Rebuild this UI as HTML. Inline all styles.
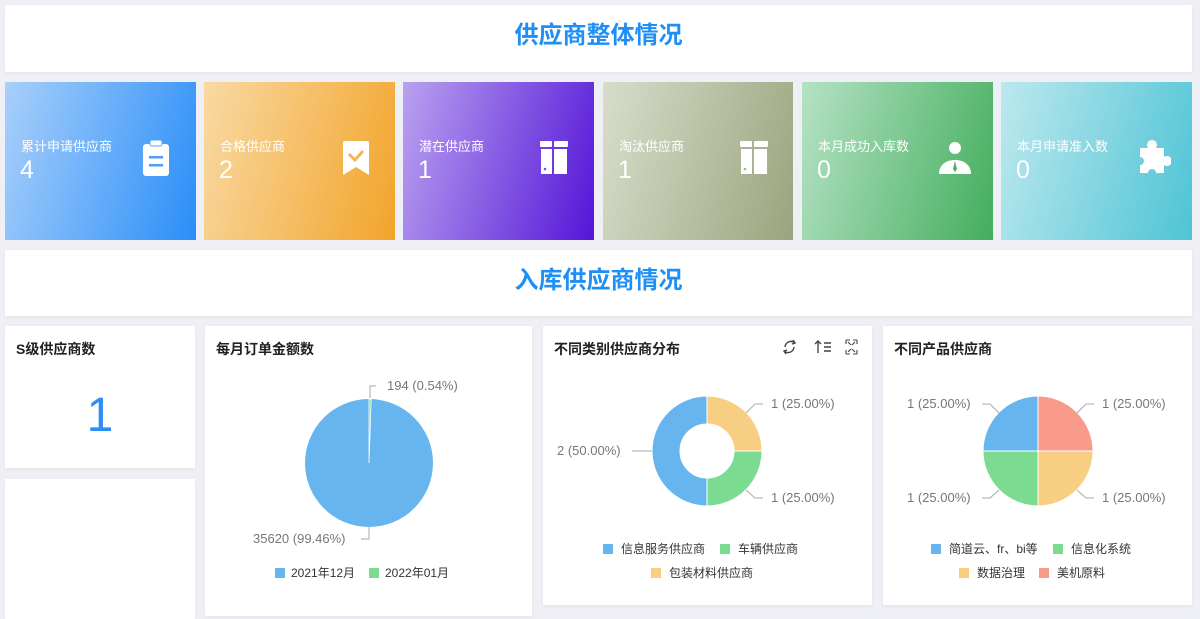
<!DOCTYPE html>
<html><head><meta charset="utf-8"><style>
*{margin:0;padding:0;box-sizing:border-box}
body{width:1200px;height:614px;background:#eff0f5;position:relative;overflow:hidden;font-family:"Liberation Sans","Noto Sans CJK SC",sans-serif}
.box{position:absolute;background:#fff;box-shadow:0 1px 4px rgba(0,0,0,.06)}
.title{display:flex;align-items:center;justify-content:center;color:#1e8ff5;font-size:24px;font-weight:bold;padding-bottom:12px}
.card{position:absolute;top:82px;height:158px;width:191px;color:#fff}
.card .l{position:absolute;left:16px;top:54px;font-size:13px}
.card .n{position:absolute;left:15px;top:74px;font-size:25px}
.card svg{position:absolute;left:136px;top:58px}
.ph{position:absolute;left:11px;top:13px;font-size:14px;font-weight:bold;color:#222}
svg text{font-family:"Liberation Sans","Noto Sans CJK SC",sans-serif}
</style></head><body>
<div class="box title" style="left:5px;top:5px;width:1187px;height:67px">供应商整体情况</div>

<div class="card" style="left:5px;background:linear-gradient(105deg,#a8cffb,#2a8ef8)"><div class="l">累计申请供应商</div><div class="n">4</div>
<svg width="32" height="38" viewBox="0 0 32 38"><rect x="2" y="4" width="26" height="32" rx="3" fill="#fff"/><rect x="9" y="0" width="12" height="6" rx="2" fill="#fff" stroke="#5aa6fa" stroke-width="1"/><rect x="8" y="16" width="14" height="2.5" fill="#4c9ef9"/><rect x="8" y="24" width="14" height="2.5" fill="#4c9ef9"/></svg></div>

<div class="card" style="left:204px;width:191px;background:linear-gradient(105deg,#f9d9a3,#f2a42a)"><div class="l">合格供应商</div><div class="n">2</div>
<svg width="32" height="38" viewBox="0 0 32 38"><path d="M3 1h24a2 2 0 0 1 2 2v32l-13-8-13 8V3a2 2 0 0 1 2-2z" fill="#fff"/><path d="M9 14l6 6 8-9" stroke="#f4b552" stroke-width="3" fill="none"/></svg></div>

<div class="card" style="left:403px;background:linear-gradient(105deg,#b9a1ef,#5515d8)"><div class="l">潜在供应商</div><div class="n">1</div>
<svg width="32" height="38" viewBox="0 0 32 38"><rect x="1" y="1" width="12" height="6" rx="1" fill="#fff"/><rect x="15" y="1" width="14" height="6" rx="1" fill="#fff"/><rect x="2" y="9" width="11" height="25" fill="#fff"/><rect x="15" y="9" width="13" height="25" fill="#fff"/><circle cx="6" cy="29" r="1.3" fill="#7a4fe2"/></svg></div>

<div class="card" style="left:603px;width:190px;background:linear-gradient(105deg,#d8ddcb,#99a57e)"><div class="l">淘汰供应商</div><div class="n">1</div>
<svg width="32" height="38" viewBox="0 0 32 38"><rect x="1" y="1" width="12" height="6" rx="1" fill="#fff"/><rect x="15" y="1" width="14" height="6" rx="1" fill="#fff"/><rect x="2" y="9" width="11" height="25" fill="#fff"/><rect x="15" y="9" width="13" height="25" fill="#fff"/><circle cx="6" cy="29" r="1.3" fill="#aab090"/></svg></div>

<div class="card" style="left:802px;background:linear-gradient(105deg,#b5e2c4,#43ae5e)"><div class="l">本月成功入库数</div><div class="n">0</div>
<svg width="34" height="38" viewBox="0 0 34 38"><circle cx="17" cy="8" r="6" fill="#fff"/><path d="M1 34c0-9 7-14 16-14s16 5 16 14z" fill="#fff"/><path d="M17 21l-2 8 2 3 2-3z" fill="#4bb066"/></svg></div>

<div class="card" style="left:1001px;background:linear-gradient(105deg,#bde8ee,#4ec4d5)"><div class="l">本月申请准入数</div><div class="n">0</div>
<svg width="34" height="38" viewBox="0 0 34 38"><path d="M3 8h8a5 5 0 1 1 8 0h8v9a5 5 0 1 1 0 8v8h-8a4 4 0 0 0-8 0H3v-8a4 4 0 0 0 0-8z" fill="#fff"/></svg></div>

<div class="box title" style="left:5px;top:250px;width:1187px;height:66px">入库供应商情况</div>

<div class="box" style="left:5px;top:326px;width:190px;height:142px"><div class="ph">S级供应商数</div><div style="position:absolute;left:0;right:0;top:62px;text-align:center;font-size:48px;color:#2a8ef8">1</div></div>
<div class="box" style="left:5px;top:479px;width:190px;height:140px"></div>

<div class="box" style="left:205px;top:326px;width:327px;height:290px"><div class="ph">每月订单金额数</div>
<svg width="327" height="290" style="position:absolute;left:0;top:0">
<circle cx="164" cy="137" r="64" fill="#67b5ef"/>
<path d="M164 137V73A64 64 0 0 1 166.2 73.04z" fill="#7bdb91" stroke="#fff" stroke-width="0.8"/>
<path d="M165 72v-12h6" stroke="#aaa" fill="none"/><text x="182" y="64" font-size="13" fill="#777">194 (0.54%)</text>
<path d="M164 201v12h-8" stroke="#aaa" fill="none"/><text x="48" y="217" font-size="13" fill="#777">35620 (99.46%)</text>
<rect x="70" y="242" width="10" height="10" fill="#67b5ef"/><text x="86" y="251" font-size="12" fill="#333">2021年12月</text>
<rect x="164" y="242" width="10" height="10" fill="#7bdb91"/><text x="180" y="251" font-size="12" fill="#333">2022年01月</text>
</svg></div>

<div class="box" style="left:543px;top:326px;width:329px;height:279px"><div class="ph">不同类别供应商分布</div>
<svg width="329" height="279" style="position:absolute;left:0;top:0">
<g stroke="#444" fill="none" stroke-width="1.4"><path d="M252 17a6 6 0 0 0-10 4M241 25a6 6 0 0 0 10-4"/><path d="M250 14l2 3-3 1M243 28l-2-3 3-1"/>
<path d="M275 15v12M272 18l3-3 3 3M281 17h7M281 21h7M281 25h7"/>
<path d="M303 14h4M303 14v4M314 14h-4M314 14v4M303 28h4M303 28v-4M314 28h-4M314 28v-4M305 16l3 3M312 16l-3 3M305 26l3-3M312 26l-3-3" stroke-width="1.1"/></g>
<g transform="translate(164,125)">
<path d="M0-55A55 55 0 0 0 0 55V27A27 27 0 0 1 0-27z" fill="#67b5ef" stroke="#fff"/>
<path d="M0-55A55 55 0 0 1 55 0H27A27 27 0 0 0 0-27z" fill="#f8cf82" stroke="#fff"/>
<path d="M55 0A55 55 0 0 1 0 55V27A27 27 0 0 0 27 0z" fill="#7bdb91" stroke="#fff"/></g>
<g stroke="#aaa" fill="none"><path d="M203 87l9-9h8"/><path d="M203 164l9 8h8"/><path d="M109 125h-20"/></g>
<g font-size="13" fill="#777"><text x="228" y="82">1 (25.00%)</text><text x="228" y="176">1 (25.00%)</text><text x="14" y="129">2 (50.00%)</text></g>
<g font-size="12" fill="#333"><rect x="60" y="218" width="10" height="10" fill="#67b5ef"/><text x="78" y="227">信息服务供应商</text>
<rect x="177" y="218" width="10" height="10" fill="#7bdb91"/><text x="195" y="227">车辆供应商</text>
<rect x="108" y="242" width="10" height="10" fill="#f8cf82"/><text x="126" y="251">包装材料供应商</text></g>
</svg></div>

<div class="box" style="left:883px;top:326px;width:309px;height:279px"><div class="ph">不同产品供应商</div>
<svg width="309" height="279" style="position:absolute;left:0;top:0">
<g transform="translate(155,125)">
<path d="M0 0V-55A55 55 0 0 0 -55 0z" fill="#67b5ef" stroke="#fff"/>
<path d="M0 0V-55A55 55 0 0 1 55 0z" fill="#f99b8b" stroke="#fff"/>
<path d="M0 0H55A55 55 0 0 1 0 55z" fill="#f8cf82" stroke="#fff"/>
<path d="M0 0V55A55 55 0 0 1 -55 0z" fill="#7bdb91" stroke="#fff"/></g>
<g stroke="#aaa" fill="none"><path d="M194 87l9-9h8"/><path d="M194 164l9 8h8"/><path d="M116 87l-9-9h-8"/><path d="M116 164l-9 8h-8"/></g>
<g font-size="13" fill="#777"><text x="219" y="82">1 (25.00%)</text><text x="219" y="176">1 (25.00%)</text><text x="24" y="82">1 (25.00%)</text><text x="24" y="176">1 (25.00%)</text></g>
<g font-size="12" fill="#333"><rect x="48" y="218" width="10" height="10" fill="#67b5ef"/><text x="66" y="227">简道云、fr、bi等</text>
<rect x="170" y="218" width="10" height="10" fill="#7bdb91"/><text x="188" y="227">信息化系统</text>
<rect x="76" y="242" width="10" height="10" fill="#f8cf82"/><text x="94" y="251">数据治理</text>
<rect x="156" y="242" width="10" height="10" fill="#f99b8b"/><text x="174" y="251">美机原料</text></g>
</svg></div>
</body></html>
